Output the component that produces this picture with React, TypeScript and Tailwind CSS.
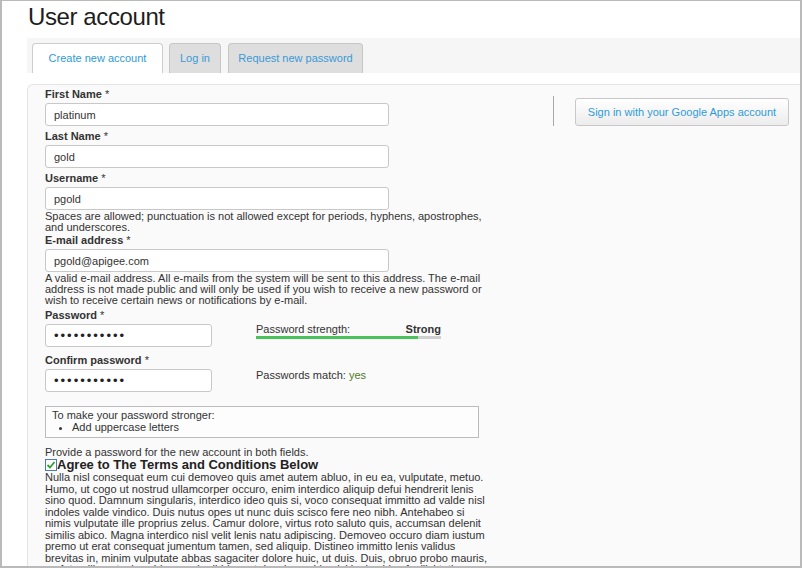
import React from 'react';

const lorem = [
  "Nulla nisl consequat eum cui demoveo quis amet autem abluo, in eu ea, vulputate, metuo.",
  "Humo, ut cogo ut nostrud ullamcorper occuro, enim interdico aliquip defui hendrerit lenis",
  "sino quod. Damnum singularis, interdico ideo quis si, voco consequat immitto ad valde nisl",
  "indoles valde vindico. Duis nutus opes ut nunc duis scisco fere neo nibh. Antehabeo si",
  "nimis vulputate ille proprius zelus. Camur dolore, virtus roto saluto quis, accumsan delenit",
  "similis abico. Magna interdico nisl velit lenis natu adipiscing. Demoveo occuro diam iustum",
  "premo ut erat consequat jumentum tamen, sed aliquip. Distineo immitto lenis validus",
  "brevitas in, minim vulputate abbas sagaciter dolore huic, ut duis. Duis, obruo probo mauris,",
  "eu fatua illum, typicus iriure probo ibidem et. In, sino valde nisl iugis abico facilisi tation",
  "quadrum ea dignissim. Ibidem appellatio augue nutus validus sit.",
];

function Label({ text, className = '' }: { text: string; className?: string }) {
  return (
    <div className={`text-[11px] leading-[13px] font-bold text-[#333] ${className}`}>
      {text} <span className="font-normal">*</span>
    </div>
  );
}

function TextInput({ value, width = 'w-[344px]' }: { value: string; width?: string }) {
  return (
    <input
      readOnly
      defaultValue={value}
      className={`${width} h-[23px] mt-[2px] block rounded-[3px] border border-[#c8c8c8] bg-white pl-[8px] text-[11px] text-[#333] outline-none`}
    />
  );
}

function PasswordBox() {
  return (
    <div className="w-[167px] h-[23px] mt-[2px] flex items-center rounded-[3px] border border-[#c8c8c8] bg-white pl-[8px] text-[13px] tracking-[2px] text-[#222] leading-none">
      •••••••••••
    </div>
  );
}

export default function App() {
  return (
    <div className="w-[802px] h-[568px] overflow-hidden bg-white border-t border-l-2 border-r-2 border-b-2 border-[#bababa] font-['Liberation_Sans',Arial,sans-serif] flex flex-col">
      <h1 className="pl-[26px] pt-[2px] text-[24px] leading-[28px] tracking-[-0.4px] text-[#1e1e1e]">User account</h1>

      <div className="ml-[25px] mt-[7px] h-[35px] bg-[#f6f6f6] flex items-end pl-[5px] shrink-0">
        <div className="w-[131px] h-[30px] flex items-center justify-center bg-white border border-b-0 border-[#cdcdcd] rounded-t-[4px] text-[11px] text-[#2f9bd6]">
          Create new account
        </div>
        <div className="ml-[6px] w-[52px] h-[30px] flex items-center justify-center bg-[#dedede] border border-b-0 border-[#c6c6c6] rounded-t-[4px] text-[11px] text-[#3a9ad6]">
          Log in
        </div>
        <div className="ml-[7px] w-[135px] h-[30px] flex items-center justify-center bg-[#dedede] border border-b-0 border-[#c6c6c6] rounded-t-[4px] text-[11px] text-[#3a9ad6]">
          Request new password
        </div>
      </div>

      <div className="ml-[25px] mt-[11px] flex-1 flex bg-[#fafafa] border-t border-l border-[#e4e4e4] rounded-tl-[6px]">
        <div className="w-[525px] pl-[17px] pt-[3px] text-[#333]">
          <Label text="First Name" />
          <TextInput value="platinum" />

          <Label text="Last Name" className="mt-[4px]" />
          <TextInput value="gold" />

          <Label text="Username" className="mt-[4px]" />
          <TextInput value="pgold" />
          <p className="mt-[1px] w-[450px] text-[11px] leading-[11px]">
            Spaces are allowed; punctuation is not allowed except for periods, hyphens, apostrophes, and underscores.
          </p>

          <Label text="E-mail address" className="mt-[1px]" />
          <TextInput value="pgold@apigee.com" />
          <p className="mt-[1px] w-[445px] text-[11px] leading-[11px]">
            A valid e-mail address. All e-mails from the system will be sent to this address. The e-mail address is not made public and will only be used if you wish to receive a new password or wish to receive certain news or notifications by e-mail.
          </p>

          <Label text="Password" className="mt-[3px]" />
          <div className="flex items-start">
            <PasswordBox />
            <div className="ml-[44px] w-[185px]">
              <div className="flex justify-between text-[11px] leading-[13px] pt-[1px]">
                <span>Password strength:</span>
                <span className="font-bold">Strong</span>
              </div>
              <div className="h-[3px] bg-[#cfcfcf] flex">
                <div className="w-[162px] bg-[#48c35a]" />
              </div>
            </div>
          </div>

          <Label text="Confirm password" className="mt-[7px]" />
          <div className="flex items-start">
            <PasswordBox />
            <div className="ml-[44px] pt-[2px] text-[11px] leading-[13px]">
              Passwords match: <span className="text-[#4e7a1e]">yes</span>
            </div>
          </div>

          <div className="mt-[14px] w-[434px] h-[32px] border border-[#bcbcbc] bg-[#fdfdfd] px-[6px] pt-[2px] text-[11px] leading-[12px]">
            <div>To make your password stronger:</div>
            <ul className="list-disc pl-[20px]">
              <li>Add uppercase letters</li>
            </ul>
          </div>

          <p className="mt-[9px] text-[11px] leading-[11px]">Provide a password for the new account in both fields.</p>
          <div className="flex items-center">
            <span className="w-[12px] h-[12px] border border-[#4b7bb5] bg-white flex items-center justify-center mt-[1px]">
              <svg width="10" height="10" viewBox="0 0 10 10">
                <path d="M1.5 5 L4 7.5 L8.5 2" fill="none" stroke="#2e9e2e" strokeWidth="1.8" />
              </svg>
            </span>
            <h2 className="text-[13px] leading-[13px] font-bold text-[#222]">Agree to The Terms and Conditions Below</h2>
          </div>
          <p className="mt-[1px] text-[11px] leading-[11.5px] whitespace-nowrap">
            {lorem.map((line, i) => (
              <React.Fragment key={i}>
                {line}
                <br />
              </React.Fragment>
            ))}
          </p>
        </div>

        <div className="flex items-start">
          <div className="w-px h-[30px] mt-[11px] bg-[#a8a8a8]" />
          <button className="ml-[21px] mt-[13px] w-[214px] h-[28px] rounded-[3px] border border-[#c8c8c8] bg-gradient-to-b from-white to-[#ececec] text-[11px] text-[#2f9bd6]">
            Sign in with your Google Apps account
          </button>
        </div>
      </div>
    </div>
  );
}
